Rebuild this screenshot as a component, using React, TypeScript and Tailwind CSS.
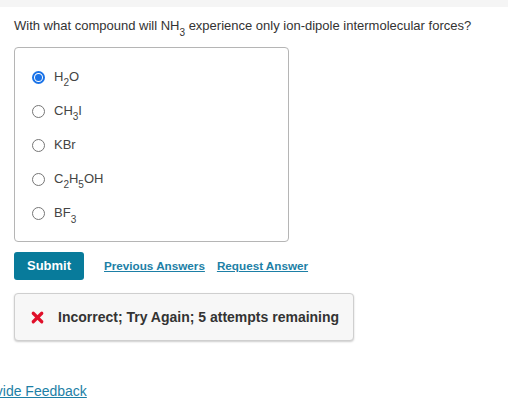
import React, { useState } from "react";
import { X } from "lucide-react";

const OPTIONS: { id: string; label: React.ReactNode }[] = [
  { id: "h2o", label: <>H<sub className="text-[10px] align-[-2px]">2</sub>O</> },
  { id: "ch3i", label: <>CH<sub className="text-[10px] align-[-2px]">3</sub>I</> },
  { id: "kbr", label: <>KBr</> },
  {
    id: "c2h5oh",
    label: (
      <>
        C<sub className="text-[10px] align-[-2px]">2</sub>H<sub className="text-[10px] align-[-2px]">5</sub>OH
      </>
    ),
  },
  { id: "bf3", label: <>BF<sub className="text-[10px] align-[-3px]">3</sub></> },
];

const App: React.FC = () => {
  const [picked, setPicked] = useState("h2o");

  return (
    <div className="w-[508px] h-[420px] overflow-hidden bg-white text-[#333] font-['Liberation_Sans',Arial,sans-serif]">
      <div className="h-[7px] bg-[#f5f5f5]" />
      <div className="px-[14px]">
        <p className="mt-[10px] text-[13px] leading-[18px]">
          With what compound will NH<sub className="text-[10px] align-[-3px]">3</sub> experience only ion-dipole intermolecular forces?
        </p>

        {/* answer choices */}
        <div className="mt-[12px] w-[275px] h-[195px] border border-[#b5b5b5] rounded-[4px] pt-[12px] pl-[17px]">
          {OPTIONS.map((o) => (
            <label key={o.id} className="flex items-center h-[34px] cursor-pointer">
              <span
                onClick={() => setPicked(o.id)}
                className={
                  picked === o.id
                    ? "w-[13px] h-[13px] rounded-full border-2 border-[#1a73e8] bg-white flex items-center justify-center"
                    : "w-[13px] h-[13px] rounded-full border border-[#767676] bg-white"
                }
              >
                {picked === o.id && <span className="w-[7px] h-[7px] rounded-full bg-[#1a73e8]" />}
              </span>
              <span className="ml-[9px] text-[13px] text-[#444]">{o.label}</span>
            </label>
          ))}
        </div>

        {/* actions */}
        <div className="mt-[10px] flex items-center">
          <button className="w-[70px] h-[28px] rounded-[3px] bg-[#087b9b] text-white text-[13px] font-bold">
            Submit
          </button>
          <a href="#" className="ml-[20px] text-[11.7px] font-bold text-[#1d7fa6] underline">
            Previous Answers
          </a>
          <a href="#" className="ml-[12px] text-[11.7px] font-bold text-[#1d7fa6] underline">
            Request Answer
          </a>
        </div>

        {/* feedback */}
        <div className="mt-[13px] w-[340px] h-[48px] bg-[#f7f7f7] border border-[#cfcfcf] rounded-[4px] shadow-[0_1px_2px_rgba(0,0,0,0.2)] flex items-center pl-[14px]">
          <X className="w-[17px] h-[17px] text-[#e0102a]" strokeWidth={4.5} />
          <span className="ml-[12px] text-[14px] font-bold text-[#333]">
            Incorrect; Try Again; 5 attempts remaining
          </span>
        </div>
      </div>

      <a href="#" className="block mt-[40px] -ml-[26px] text-[14px] text-[#1d7fa6] underline">
        Provide Feedback
      </a>
    </div>
  );
};

export default App;
